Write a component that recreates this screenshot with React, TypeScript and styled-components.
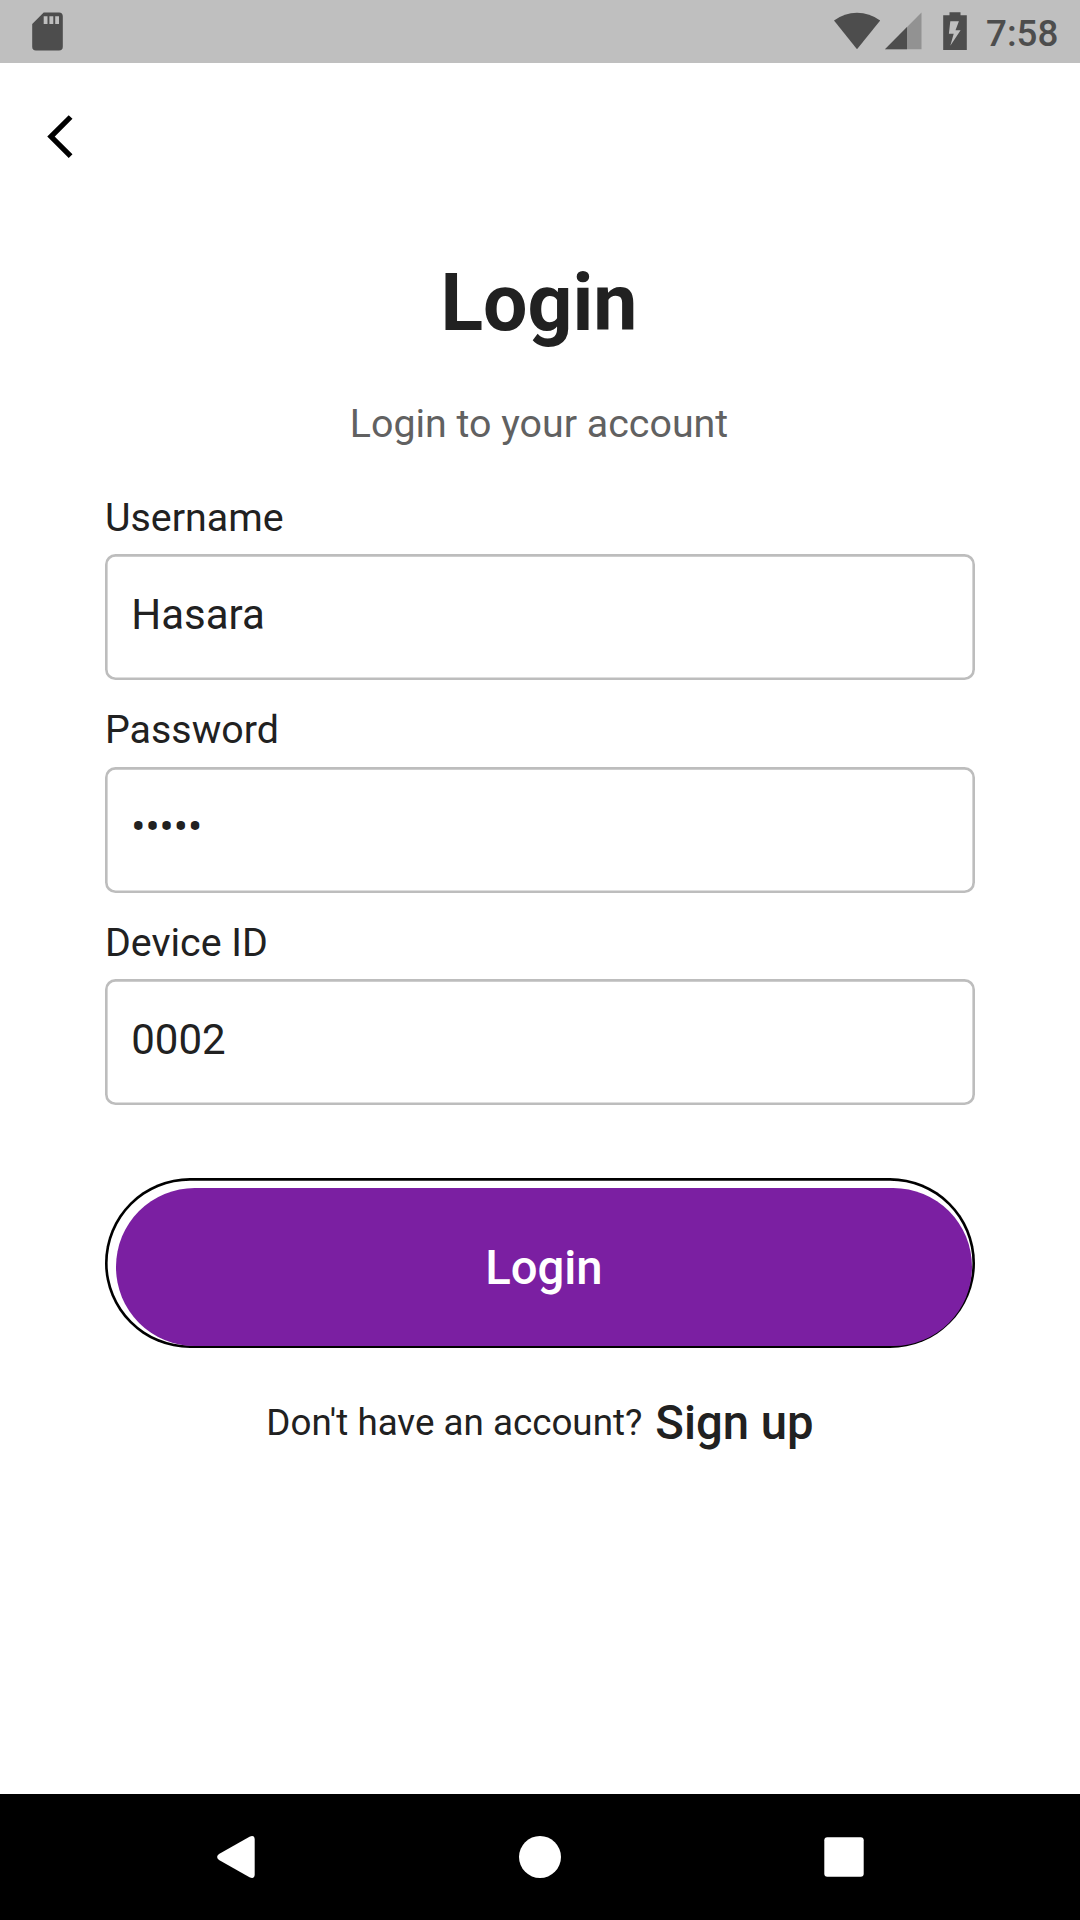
import React from "react";
import styled, { createGlobalStyle } from "styled-components";

const GlobalStyle = createGlobalStyle`
  body { margin: 0; background: #fff; }
  *, *::before, *::after { box-sizing: border-box; }
`;

const Screen = styled.div`
  display: flex;
  flex-direction: column;
  width: 1080px;
  height: 1920px;
  overflow: hidden;
  background: #fff;
  color: #212121;
  font-family: Roboto, "Liberation Sans", sans-serif;
`;

const StatusBar = styled.header`
  display: flex;
  align-items: flex-start;
  flex: none;
  height: 63px;
  padding: 0 22px 0 32px;
  background: #bfbfbf;
  color: #4d4d4d;

  svg { display: block; flex: none; }
`;

const StatusIcons = styled.div`
  display: flex;
  width: 224px;
  margin-left: auto;
`;

const Clock = styled.time`
  margin-left: 18px;
  padding-top: 12px;
  font-size: 36.75px;
  line-height: 43px;
  font-weight: 500;
`;

const AppBar = styled.nav`
  display: flex;
  flex: none;
  height: 147px;
  padding: 51px 0 0 46px;
`;

const BackButton = styled.button`
  width: 30px;
  height: 46px;
  padding: 0;
  border: 0;
  background: none;
  color: #000;

  svg { display: block; }
`;

const Content = styled.main`
  display: flex;
  flex-direction: column;
  flex: 1;
  min-height: 0;
  padding: 47px 105px 0;
`;

const Title = styled.h1`
  margin: 0;
  padding-right: 2px;
  font-size: 78.75px;
  line-height: 92px;
  font-weight: 700;
  text-align: center;
`;

const Subtitle = styled.p`
  margin: 51.5px 0 48px;
  padding-right: 2px;
  color: #616161;
  font-size: 39.375px;
  line-height: 46px;
  text-align: center;
`;

const Form = styled.form`
  display: flex;
  flex-direction: column;
`;

const Field = styled.label`
  display: flex;
  flex-direction: column;
  height: 185.6px;
  margin-bottom: 27px;
`;

const Label = styled.span`
  margin-bottom: 13.6px;
  font-size: 39.375px;
  line-height: 46px;
`;

const Value = styled.span`
  height: 126px;
  padding: 35.6px 26.25px 0;
  border-radius: 10.5px;
  box-shadow: inset 0 0 0 2.625px #bdbdbd;
  font-size: 42px;
  line-height: 49px;
`;

const ButtonFrame = styled.div`
  height: 170.6px;
  margin-top: 45.3px;
  padding: 10.5px 2.625px 2.625px 10.5px;
  border-radius: 85.3px;
  box-shadow: inset 0 0 0 2.625px #000;
`;

const SubmitButton = styled.button`
  display: block;
  width: 100%;
  height: 157.5px;
  padding: 2px 0 0;
  border: 0;
  border-radius: 78.75px;
  background: #7b1fa2;
  color: #fff;
  font-family: inherit;
  font-size: 47.25px;
  font-weight: 500;
`;

const SignUpRow = styled.div`
  display: flex;
  align-items: center;
  justify-content: center;
  margin-top: 47px;
`;

const Prompt = styled.span`
  font-size: 36.75px;
  line-height: 56px;
`;

const SignUpLink = styled.a`
  margin-left: 13px;
  font-size: 47.25px;
  line-height: 56px;
  font-weight: 500;
`;

const NavBar = styled.footer`
  display: grid;
  grid-template-columns: repeat(3, 1fr);
  flex: none;
  height: 126px;
  padding: 0 84px;
  align-items: center;
  justify-items: center;
  background: #000;

  svg { display: block; }
`;

const fields = [
  { label: "Username", value: "Hasara" },
  { label: "Password", value: "•••••" },
  { label: "Device ID", value: "0002" },
];

function SdCardIcon() {
  return (
    <svg width="31" height="63" viewBox="32 0 31 63">
      <path fill="#4d4d4d" fillRule="evenodd" d="M43.7 12.5H59a3.8 3.8 0 0 1 3.8 3.8v30.4a3.8 3.8 0 0 1-3.8 3.8H36a3.8 3.8 0 0 1-3.8-3.8V24zM43.7 16.3v7.7h3.8v-7.7zM49.4 16.3v7.7h3.9v-7.7zM55.2 16.3v7.7h3.8v-7.7z" />
    </svg>
  );
}

function SystemIcons() {
  return (
    <svg width="134" height="63" viewBox="834 0 134 63">
      <path fill="#4d4d4d" d="M834 20.6Q844.5 12.8 857 12.8T880.2 20.6L857 49.2z" />
      <path fill="#929292" d="M921.5 12.5V49.3H885z" />
      <path fill="#4d4d4d" d="M907 27.1V49.3H885z" />
      <path fill="#4d4d4d" fillRule="evenodd" d="M949.5 12.2h11v3h6.3v34.8h-23.6V15.2h6.3zM950.3 21.2L948.9 33.8H953.7L950.3 45.8L960.6 30.3H955.5L958.9 21.2z" />
    </svg>
  );
}

export default function App() {
  return (
    <Screen>
      <GlobalStyle />
      <StatusBar>
        <SdCardIcon />
        <StatusIcons>
          <SystemIcons />
          <Clock>7:58</Clock>
        </StatusIcons>
      </StatusBar>
      <AppBar>
        <BackButton aria-label="Back">
          <svg width="30" height="46" viewBox="46 114 30 46">
            <path d="M70.6 117L51 136.6L70.6 156.200" fill="none" stroke="currentColor" strokeWidth="5.3" />
          </svg>
        </BackButton>
      </AppBar>
      <Content>
        <Title>Login</Title>
        <Subtitle>Login to your account</Subtitle>
        <Form>
          {fields.map((f) => (
            <Field key={f.label}>
              <Label>{f.label}</Label>
              <Value>{f.value}</Value>
            </Field>
          ))}
          <ButtonFrame>
            <SubmitButton type="button">Login</SubmitButton>
          </ButtonFrame>
        </Form>
        <SignUpRow>
          <Prompt>Don't have an account?</Prompt>
          <SignUpLink>Sign up</SignUpLink>
        </SignUpRow>
      </Content>
      <NavBar>
        <svg width="42" height="42" viewBox="0 0 42 42">
          <path fill="#fff" d="M34.5.7Q39.5-1.5 39.700 3.500V38.500Q39.500 43.500 34.500 41.300L4 24Q.2 21 4 18z" />
        </svg>
        <svg width="42" height="42" viewBox="0 0 42 42">
          <circle cx="21" cy="21" r="21" fill="#fff" />
        </svg>
        <svg width="40" height="40" viewBox="0 0 40 40">
          <rect x=".3" y=".3" width="39.4" height="39.4" rx="3" fill="#fff" />
        </svg>
      </NavBar>
    </Screen>
  );
}
